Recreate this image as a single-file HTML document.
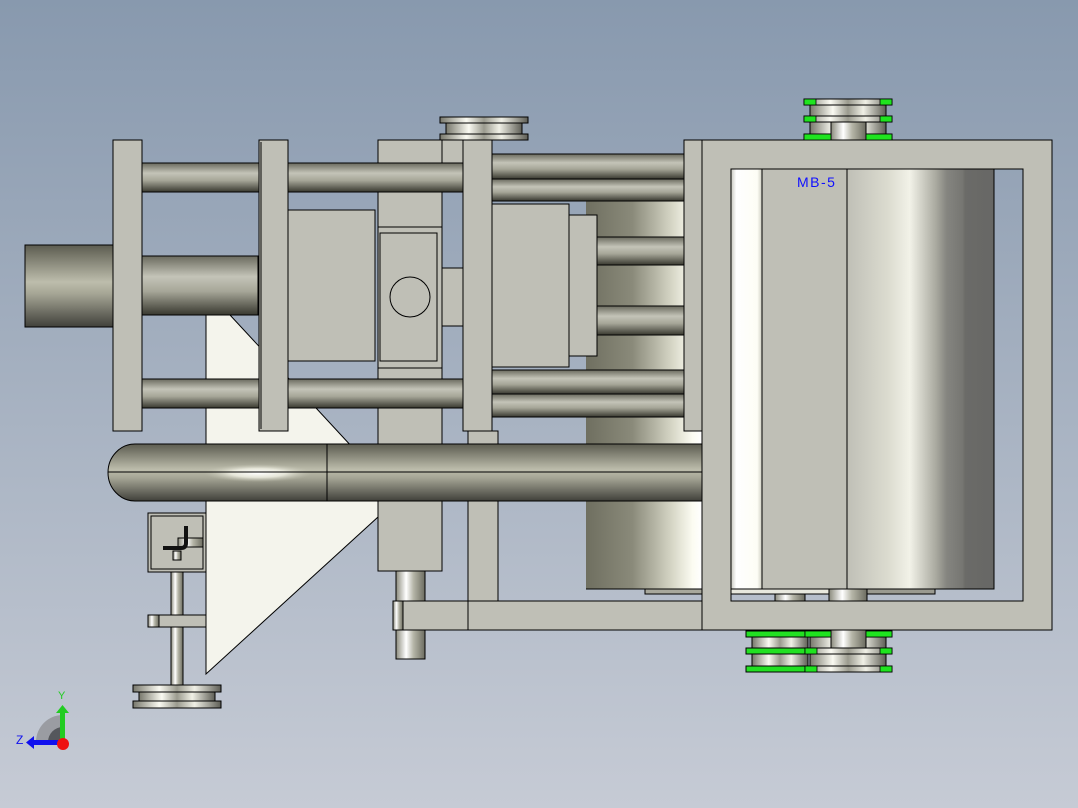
<!DOCTYPE html>
<html><head><meta charset="utf-8"><style>
html,body{margin:0;padding:0;width:1078px;height:808px;overflow:hidden}
svg{display:block}
</style></head><body>
<svg width="1078" height="808" viewBox="0 0 1078 808" xmlns="http://www.w3.org/2000/svg" font-family="Liberation Sans, sans-serif">
<defs>
<linearGradient id="bg" x1="0" y1="0" x2="0" y2="1"><stop offset="0" stop-color="#8899ae"/><stop offset="1" stop-color="#c6cbd5"/></linearGradient>
<linearGradient id="rod" x1="0" y1="0" x2="0" y2="1"><stop offset="0" stop-color="#6a6a5e"/><stop offset="0.35" stop-color="#c4c4b8"/><stop offset="0.6" stop-color="#a6a698"/><stop offset="1" stop-color="#38382f"/></linearGradient>
<linearGradient id="pipe" x1="0" y1="0" x2="0" y2="1"><stop offset="0" stop-color="#5c5c50"/><stop offset="0.45" stop-color="#bdbdac"/><stop offset="0.6" stop-color="#a4a494"/><stop offset="1" stop-color="#40403a"/></linearGradient>
<linearGradient id="cylv" x1="0" y1="0" x2="1" y2="0"><stop offset="0" stop-color="#6f6f60"/><stop offset="0.4" stop-color="#8a8a7a"/><stop offset="0.75" stop-color="#d8d8c8"/><stop offset="0.92" stop-color="#fcfcf2"/><stop offset="1" stop-color="#ffffff"/></linearGradient>
<linearGradient id="roller" x1="731" y1="0" x2="994" y2="0" gradientUnits="userSpaceOnUse">
<stop offset="0" stop-color="#c8c8c0"/><stop offset="0.02" stop-color="#ffffff"/><stop offset="0.1" stop-color="#fdfdf5"/><stop offset="0.12" stop-color="#c9c9bc"/><stop offset="0.12" stop-color="#bfbfb6"/><stop offset="0.44" stop-color="#bfbfb6"/><stop offset="0.6" stop-color="#dcdcd0"/><stop offset="0.68" stop-color="#f2f2e8"/><stop offset="0.78" stop-color="#a9a99f"/><stop offset="0.82" stop-color="#858580"/><stop offset="0.88" stop-color="#767672"/><stop offset="0.89" stop-color="#6b6b68"/><stop offset="1" stop-color="#676765"/></linearGradient>
<linearGradient id="met" x1="0" y1="0" x2="1" y2="0"><stop offset="0" stop-color="#77776b"/><stop offset="0.3" stop-color="#fafaf2"/><stop offset="0.5" stop-color="#9a9a8e"/><stop offset="0.7" stop-color="#f0f0e6"/><stop offset="1" stop-color="#5d5d55"/></linearGradient>
<linearGradient id="shaft" x1="0" y1="0" x2="1" y2="0"><stop offset="0" stop-color="#8a8a7c"/><stop offset="0.35" stop-color="#ffffff"/><stop offset="0.6" stop-color="#b6b6a8"/><stop offset="1" stop-color="#6c6c60"/></linearGradient>
<radialGradient id="hl" cx="0.5" cy="0.5" r="0.5"><stop offset="0" stop-color="#ffffff"/><stop offset="0.5" stop-color="#f4f4e8" stop-opacity="0.8"/><stop offset="1" stop-color="#c0c0b0" stop-opacity="0"/></radialGradient>
</defs>
<rect width="1078" height="808" fill="url(#bg)"/>

<g stroke="#000" stroke-width="1">
<polygon points="206,315 230,315 378,475 378,517 206,674" fill="#f4f4ec"/>
<rect x="586" y="200" width="116" height="389" fill="url(#cylv)" stroke="none"/>
<line x1="586" y1="589" x2="702" y2="589"/>
<rect x="645" y="589" width="57" height="5" fill="#a8a89c"/>
<rect x="25" y="245" width="88" height="82" fill="url(#pipe)"/>
<rect x="142" y="163" width="330" height="29" fill="url(#rod)"/>
<rect x="142" y="256" width="116" height="59" fill="url(#rod)"/>
<rect x="142" y="379" width="330" height="29" fill="url(#rod)"/>
<rect x="378" y="140" width="64" height="431" fill="#bfbfb6"/>
<rect x="378" y="227" width="64" height="141" fill="#bfbfb6"/>
<rect x="380" y="233" width="57" height="128" fill="#bfbfb6"/>
<circle cx="410" cy="297" r="20" fill="none"/>
<rect x="442" y="268" width="21" height="58" fill="#bfbfb6"/>
<rect x="113" y="140" width="29" height="291" fill="#bfbfb6"/>
<rect x="259" y="140" width="29" height="291" fill="#bfbfb6"/>
<line x1="261" y1="142" x2="261" y2="429"/>
<rect x="288" y="210" width="87" height="151" fill="#bfbfb6"/>
<rect x="492" y="154" width="192" height="25" fill="url(#rod)"/>
<rect x="492" y="179" width="192" height="22" fill="url(#rod)"/>
<rect x="597" y="237" width="87" height="28" fill="url(#rod)"/>
<rect x="597" y="306" width="87" height="29" fill="url(#rod)"/>
<rect x="492" y="370" width="210" height="24" fill="url(#rod)"/>
<rect x="492" y="394" width="210" height="23" fill="url(#rod)"/>
<rect x="492" y="204" width="77" height="163" fill="#bfbfb6"/>
<rect x="569" y="215" width="28" height="141" fill="#bfbfb6"/>
<rect x="468" y="431" width="30" height="199" fill="#bfbfb6"/>
<rect x="393" y="601" width="309" height="29" fill="#bfbfb6"/>
<rect x="396" y="571" width="29" height="88" fill="url(#shaft)"/>
<rect x="393" y="601" width="10" height="29" fill="url(#shaft)"/>
<rect x="403" y="601" width="65" height="29" fill="#bfbfb6"/>
<line x1="468" y1="601" x2="468" y2="630"/>
<rect x="463" y="140" width="29" height="291" fill="#bfbfb6"/>
<rect x="684" y="140" width="18" height="291" fill="#bfbfb6"/>
<rect x="378" y="140" width="64" height="87" fill="#bfbfb6"/>
<rect x="442" y="140" width="21" height="52" fill="#bfbfb6"/>
<rect x="142" y="163" width="117" height="29" fill="url(#rod)"/>
<rect x="288" y="163" width="175" height="29" fill="url(#rod)"/>
<rect x="288" y="379" width="175" height="29" fill="url(#rod)"/>
<rect x="142" y="379" width="117" height="29" fill="url(#rod)"/>
<path d="M135,444 H702 V501 H135 A27,28.5 0 0 1 135,444 Z" fill="url(#pipe)"/>
<ellipse cx="258" cy="473" rx="55" ry="9" fill="url(#hl)" stroke="none"/>
<line x1="327" y1="444" x2="327" y2="501"/>
<line x1="108" y1="472" x2="702" y2="472"/>
<path d="M702,140 H1052 V630 H702 Z M731,169 V601 H1023 V169 Z" fill="#bfbfb6" fill-rule="evenodd"/>
<rect x="731" y="169" width="263" height="420" fill="url(#roller)"/>
<line x1="762" y1="169" x2="762" y2="589"/>
<line x1="847" y1="169" x2="847" y2="589"/>
<rect x="731" y="589" width="180" height="5" fill="#e8e8de"/>
<rect x="775" y="594" width="30" height="7" fill="url(#shaft)"/>
<rect x="829" y="589" width="38" height="12" fill="url(#shaft)"/>
<rect x="867" y="589" width="68" height="5" fill="#9a9a90"/>
</g>
<text x="797" y="187" fill="#1010ff" font-size="14" letter-spacing="1.5">MB-5</text>

<g stroke="#000" stroke-width="1">
<rect x="440" y="117" width="88" height="6" fill="url(#met)"/>
<rect x="446" y="123" width="76" height="11" fill="url(#met)"/>
<rect x="440" y="134" width="88" height="6" fill="url(#met)"/>
<rect x="804" y="99" width="88" height="6" fill="url(#met)"/>
<rect x="810" y="105" width="76" height="11" fill="url(#met)"/>
<rect x="804" y="116" width="88" height="6" fill="url(#met)"/>
<rect x="810" y="122" width="76" height="12" fill="url(#met)"/>
<rect x="804" y="134" width="88" height="6" fill="url(#met)"/>
<rect x="831" y="122" width="35" height="18" fill="url(#shaft)"/>
<rect x="746" y="631" width="64" height="6" fill="#22e022"/>
<rect x="752" y="637" width="56" height="11" fill="url(#met)"/>
<rect x="746" y="648" width="64" height="6" fill="#22e022"/>
<rect x="752" y="654" width="56" height="12" fill="url(#met)"/>
<rect x="746" y="666" width="64" height="6" fill="#22e022"/>
<rect x="805" y="631" width="87" height="6" fill="url(#met)"/>
<rect x="810" y="637" width="76" height="11" fill="url(#met)"/>
<rect x="805" y="648" width="87" height="6" fill="url(#met)"/>
<rect x="810" y="654" width="76" height="12" fill="url(#met)"/>
<rect x="805" y="666" width="87" height="6" fill="url(#met)"/>
<rect x="831" y="630" width="35" height="18" fill="url(#shaft)"/>
<rect x="171" y="560" width="12" height="126" fill="url(#shaft)"/>
<rect x="148" y="615" width="58" height="12" fill="#bfbfb6"/>
<rect x="148" y="615" width="11" height="12" fill="url(#shaft)"/>
<rect x="133" y="685" width="88" height="7" fill="url(#met)"/>
<rect x="139" y="692" width="76" height="9" fill="url(#met)"/>
<rect x="133" y="701" width="88" height="7" fill="url(#met)"/>
<rect x="148" y="513" width="58" height="59" fill="#bfbfb6"/>
<rect x="151" y="516" width="52" height="53" fill="#bfbfb6"/>
<rect x="178" y="538" width="25" height="9" fill="url(#shaft)"/>
<rect x="173" y="551" width="8" height="9" fill="url(#shaft)"/>
</g>
<g fill="#1fe41f" stroke="#000" stroke-width="0.8">
<rect x="804" y="99" width="12" height="6"/><rect x="880" y="99" width="12" height="6"/>
<rect x="804" y="116" width="12" height="6"/><rect x="880" y="116" width="12" height="6"/>
<rect x="804" y="134" width="27" height="6"/><rect x="866" y="134" width="26" height="6"/>
<rect x="805" y="631" width="26" height="6"/><rect x="866" y="631" width="26" height="6"/>
<rect x="805" y="648" width="12" height="6"/><rect x="880" y="648" width="12" height="6"/>
<rect x="805" y="666" width="12" height="6"/><rect x="880" y="666" width="12" height="6"/>
</g>
<path d="M186,526 V543 Q186,548 181,548 H163" fill="none" stroke="#111" stroke-width="4"/>
<path d="M36,742 A27,27 0 0 1 63,715 V742 Z" fill="#9a9ca2"/>
<path d="M48,742 A15,15 0 0 1 63,727 V742 Z" fill="#55575c"/>
<rect x="60" y="712" width="5" height="30" fill="#22cc22"/>
<polygon points="56,713 69,713 62.5,705" fill="#22cc22"/>
<rect x="33" y="740" width="30" height="5" fill="#1010ee"/>
<polygon points="34,736 34,749 26,742.5" fill="#1010ee"/>
<circle cx="63" cy="744" r="6" fill="#ee1111"/>
<text x="58" y="699" fill="#22cc22" font-size="11">Y</text>
<text x="16" y="744" fill="#1010ee" font-size="12">Z</text>
</svg>
</body></html>
